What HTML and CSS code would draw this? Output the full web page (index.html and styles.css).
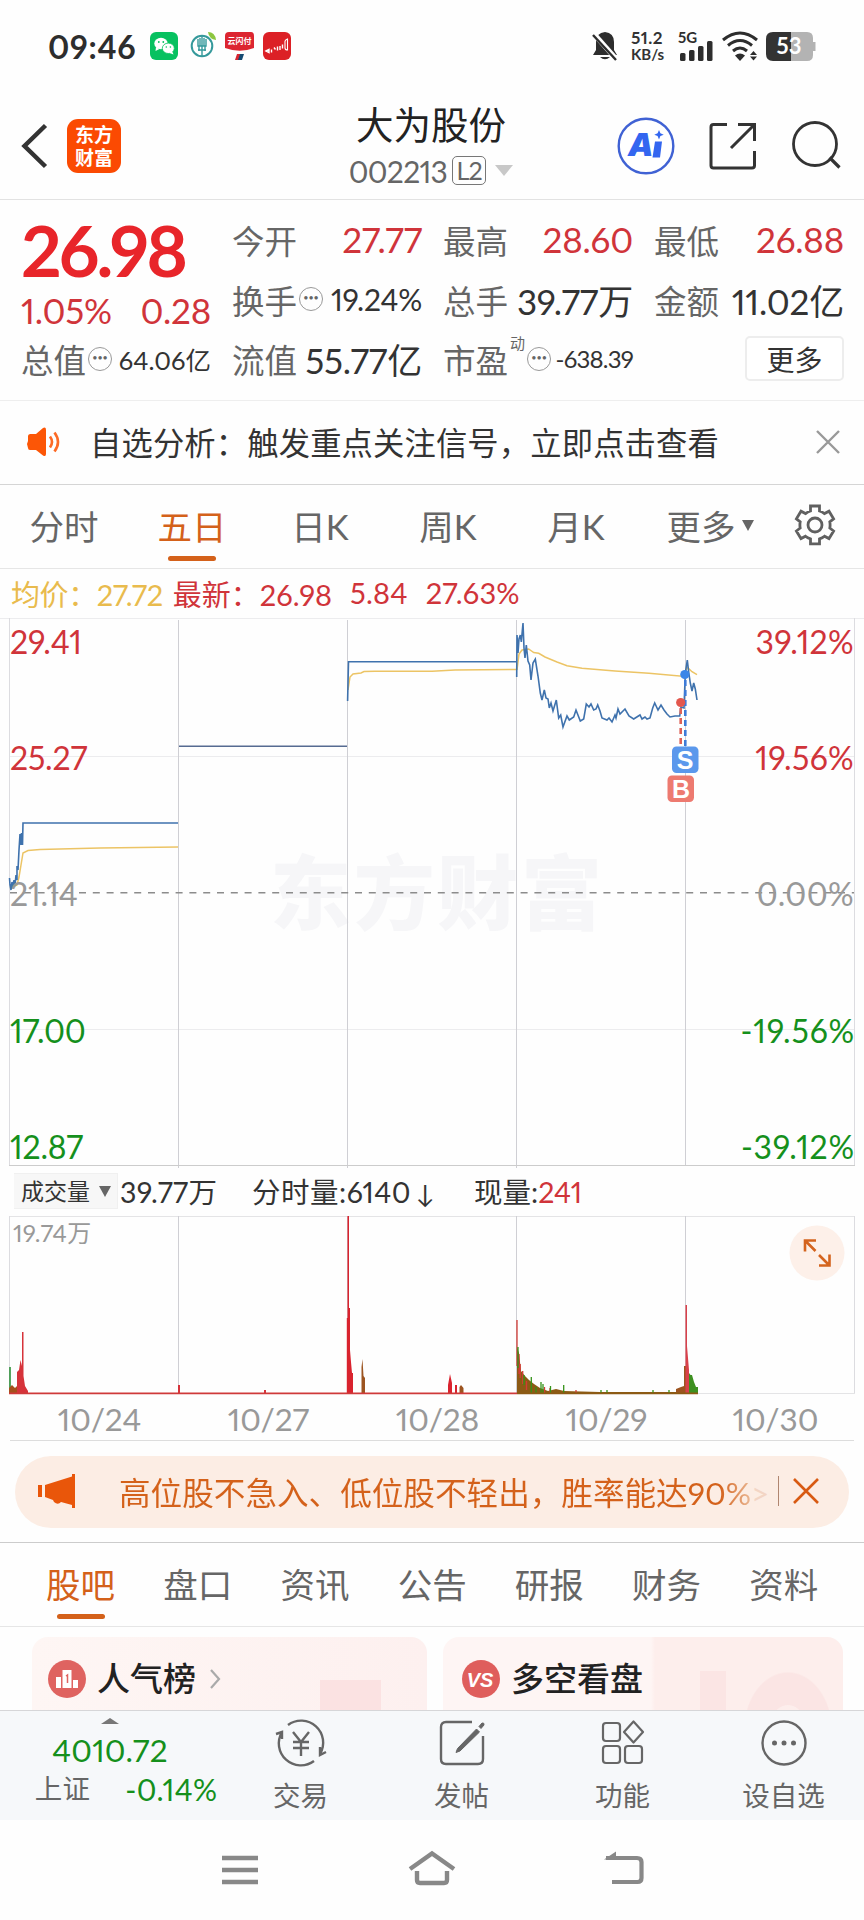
FILE: index.html
```html
<!DOCTYPE html>
<html lang="zh-CN">
<head>
  <meta charset="UTF-8" />
  <meta name="viewport" content="width=device-width, initial-scale=1" />
  <title>大为股份 002213</title>
  <link rel="stylesheet" href="styles.css">
</head>

<body>
  <!-- STATUS BAR -->
  <div class="status">
    <span class="clock">09:46</span>
    <svg class="apps" width="142" height="30" viewBox="0 0 142 30">
      <rect x="0" y="1" width="28" height="28" rx="6" fill="#07c160"/>
      <ellipse cx="11" cy="12.5" rx="6.7" ry="5.8" fill="#fff"/>
      <path d="M6 16l-.5 4 4-2z" fill="#fff"/>
      <ellipse cx="18.3" cy="17.3" rx="6" ry="5.2" fill="#fff" stroke="#07c160" stroke-width=".8"/>
      <path d="M22 20l1.5 3.4-4.5-1.6z" fill="#fff"/>
      <g fill="#07c160"><circle cx="8.8" cy="11" r=".9"/><circle cx="13.3" cy="11" r=".9"/><circle cx="16.3" cy="16" r=".8"/><circle cx="20.4" cy="16" r=".8"/></g>
      <circle cx="52" cy="15" r="10.3" fill="#fff" stroke="#35999b" stroke-width="2"/>
      <path d="M52 5v20M48 8v7h8V8M48 19h8M50 7v8M54 7v8M49 15v5M55 15v5" fill="none" stroke="#35999b" stroke-width="1.4"/>
      <path d="M58 1q7 0 8 8q-7-1-8-8z" fill="#8cc63f"/>
      <path d="M79 1h22q3 0 3 4v12q-14 5.500-29 0V5q0-4 4-4z" fill="#dc2530"/>
      <path d="M87 23h4l-2 6h-4z" fill="#d82531"/><path d="M90 23h4l-2 6h-4z" fill="#154a72"/>
      <text x="89.500" y="13" class="pay">云闪付</text>
      <rect x="113" y="1" width="28" height="28" rx="6" fill="#dc2026"/>
      <path d="M116 20l3-1.500v3zM121.500 18.500v3M124 16.500l1.500 2M127.500 15.500v4M130 15v4M132.500 13.500v4" fill="none" stroke="#fff" stroke-width="1.400"/>
      <path d="M137.500 8q-3 1-2.500 4v5q0 2 2.500 2z" fill="none" stroke="#fff" stroke-width="1.100"/>
    </svg>
    <div class="status-right">
      <svg width="26" height="30" viewBox="0 0 26 30">
        <path d="M13 1q-9 1-9 10v8l-3 5h24l-3-5v-8q0-9-9-10zM8 26h10q-5 4.500-10 0z" fill="#2d2d2d"/>
        <path d="M2 3l23 26" stroke="#fff" stroke-width="5"/>
        <path d="M1 4l23 25" stroke="#2d2d2d" stroke-width="2.400"/>
      </svg>
      <div class="speed"><span class="num">51.2</span><span>KB/s</span></div>
      <svg class="signal" width="36" height="32" viewBox="0 -2 36 32">
        <text x="0" y="11.500" class="net">5G</text>
        <g fill="#2d2d2d"><rect x="2" y="22" width="5.500" height="8" rx="1.500"/><rect x="11" y="19" width="5.500" height="11" rx="1.500"/><rect x="20" y="15" width="5.500" height="15" rx="1.500"/><rect x="29" y="10" width="5.500" height="20" rx="1.500"/></g>
      </svg>
      <svg class="wifi" width="36" height="30" viewBox="0 0 36 30">
        <g fill="none" stroke="#2d2d2d" stroke-width="3"><path d="M1 9q17-14 34 0"/><path d="M6 14.500q12-10 24 0"/><path d="M11 20q7-6 14 0"/></g>
        <path d="M13 24.500q5-4 10 0L18 30z" fill="#2d2d2d"/>
        <path d="M28 24l3.500-4 3.500 4zM28 25.500h7l-3.500 4z" fill="#2d2d2d"/>
      </svg>
      <svg class="battery" width="51" height="30" viewBox="0 0 51 30">
        <path d="M25 1h17q6 0 6 6v4h2.500v9H48v4q0 6-6 6H25z" fill="#b3b3b3"/>
        <path d="M8 1h18v29H8q-7 0-7-7V8q0-7 7-7z" fill="#333"/>
        <text x="24" y="23" class="charge">53</text>
      </svg>
    </div>
  </div>

  <!-- HEADER -->
  <header>
    <svg class="back" width="28" height="46" viewBox="0 0 28 46"><path d="M25.500 2.500L4.500 23l21 20.500" fill="none" stroke="#333" stroke-width="4.500"/></svg>
    <div class="logo">东方<br>财富</div>
    <div class="stock">
      <h1>大为股份</h1>
      <p><span>002213</span><em>L2</em><i class="tri light"></i></p>
    </div>
    <svg class="ai" width="58" height="58" viewBox="0 0 58 58">
      <circle cx="29" cy="29" r="27.300" fill="#fff" stroke="#4062d4" stroke-width="2.400"/>
      <text x="11" y="39" class="ai-text">A</text>
      <path d="M38 24.500h7l-2 16h-7.500z" fill="#3366f0"/>
      <path d="M42 13l1.400 3.300 3.300 1.400-3.300 1.400L42 22.400l-1.400-3.300-3.300-1.400 3.300-1.400z" fill="#3366f0"/>
    </svg>
    <svg class="share" width="48" height="48" viewBox="0 0 48 48">
      <path d="M18 2.500H4.500Q2 2.500 2 5v38.500q0 2.500 2.500 2.500H43q2.500 0 2.500-2.500V29M29 2.500h16.500V19M45 3L22 26" fill="none" stroke="#333" stroke-width="3"/>
    </svg>
    <svg class="search" width="50" height="50" viewBox="0 0 50 50">
      <circle cx="24" cy="23" r="21.500" fill="none" stroke="#333" stroke-width="2.800"/>
      <path d="M38.500 36.500l10 10" stroke="#333" stroke-width="3.200"/>
    </svg>
  </header>

  <!-- QUOTE -->
  <section class="quote">
    <div class="price">
      <strong>26.98</strong>
      <div><span>1.05%</span><span>0.28</span></div>
    </div>
    <div class="cell"><label>今开</label><b class="up">27.77</b></div>
    <div class="cell"><label>最高</label><b class="up">28.60</b></div>
    <div class="cell"><label>最低</label><b class="up">26.88</b></div>
    <div class="cell"><label>换手<i class="more-dot">•••</i></label><b class="mid">19.24%</b></div>
    <div class="cell"><label>总手</label><b>39.77万</b></div>
    <div class="cell"><label>金额</label><b>11.02亿</b></div>
    <div class="cell"><label>总值<i class="more-dot">•••</i></label><b class="small">64.06亿</b></div>
    <div class="cell"><label>流值</label><b>55.77亿</b></div>
    <div class="cell"><label>市盈<sup>动</sup><i class="more-dot">•••</i></label><b class="tiny">-638.39</b></div>
    <div class="cell end"><button>更多</button></div>
  </section>

  <!-- NOTICE -->
  <section class="notice">
    <svg width="36" height="30" viewBox="0 0 36 30">
      <path d="M2 9q0-1.500 2-2h6L17 1q3-1.500 3 2v24q0 3-3 1.500L10 23H4q-2 0-2-2l-1-4 1-3z" fill="#fc5606"/>
      <path d="M24 9.500q4 5.500 0 11M28.500 5.500q7 9.500 0 19" fill="none" stroke="#fc6a25" stroke-width="2.600"/>
    </svg>
    <p>自选分析：触发重点关注信号，立即点击查看</p>
    <svg class="close" width="24" height="24" viewBox="0 0 24 24"><path d="M1 1l22 22M23 1L1 23" stroke="#999" stroke-width="2.400"/></svg>
  </section>

  <!-- PERIOD TABS -->
  <nav class="period">
    <a>分时</a>
    <a class="active">五日</a>
    <a>日K</a>
    <a>周K</a>
    <a>月K</a>
    <a class="drop">更多<i class="tri"></i></a>
    <a><svg width="42" height="42" viewBox="0 0 42 42">
      <path d="M16.500 2h9v5q3 1 5 2.600l4.500-2.400 4.600 7.600-3.800 3q.6 3.200 0 6.200l3.800 3-4.600 7.600-4.500-2.400q-2 1.700-5 2.700v5h-9v-5q-3-1-5-2.700L7 34.600 2.400 27l3.800-3q-.6-3 0-6.200l-3.800-3L7 7.200l4.500 2.400q2-1.600 5-2.600z" fill="none" stroke="#606060" stroke-width="2.800"/>
      <circle cx="21" cy="21" r="7" fill="none" stroke="#606060" stroke-width="2.800"/>
    </svg></a>
  </nav>

  <!-- PRICE CHART -->
  <div class="legend">
    <span class="avg">均价：27.72</span>
    <span class="last">最新：26.98</span>
    <span>5.84</span>
    <span>27.63%</span>
  </div>
  <svg class="chart" width="864" height="551" viewBox="0 0 864 551">
    <text x="436" y="305" class="watermark" textLength="332">东方财富</text>
    <path d="M0 .5H864M9 138.500H854M9 411.500H854" stroke="#ececee"/>
    <path d="M9.500 0V547M854.500 0V547" stroke="#dcdce0"/>
    <path d="M178.500 2V550M347.500 2V550M516.500 2V550M685.500 2V547" stroke="#cfcfd4"/>
    <path d="M9 547.500H855" stroke="#ccc"/>
    <path d="M10 274.700H854" stroke="#8c8c8c" stroke-width="1.500" stroke-dasharray="7 6.800"/>
    <!-- average -->
    <g fill="none" stroke="#ecc465" stroke-width="1.500">
      <path d="M10 270L17 267L19 259L21 247L23 235L28 232.500L40 231.500L100 230L178 229"/>
      <path d="M348 72L350 59L353 56L361 55L364 53.500L375 53.300L432 53.300L455 52L516 51.500"/>
      <path d="M517 52L519 36L522 32L528.700 31L533.700 34.500L538.700 35.300L545 39L557 44L567 47.700L582 50.300L615 53L649 55.300L685 58.500L687 49L692 53.700L697 56.700"/>
    </g>
    <!-- price -->
    <g fill="none" stroke="#3f72ad" stroke-width="1.600">
      <path d="M9.500 260L10 267L11 272L12 264L13 270L14 262L15 267L16 257L17 262L17 248L18 252L19 232L20 216L21 227L21.500 215L22.500 227L23 205H178"/>
      <path d="M179 128.300H347" stroke="#566b91"/>
      <path d="M347.600 83L348.500 43.700H516.500"/>
      <path d="M516.700 59L517 17L518 35L519 21L520.300 17L521.300 24L523 5L524 30L525 40L526.300 27L528 43L529.700 47L531 62L533 45L535.300 41L538 58L540.300 75L542 82L544.300 72L546 80L548 81L549.300 90L551 85L553 93L556.300 82L558.700 100L560.700 97L563 109L567 98L569.300 102L573.700 99L576 92L580.300 103L583.700 101L586.300 86L589 89L591 86L593.700 92L596 91L597.700 87L600 93L602 100L607 102L609 100L612 104L615 97L616 100L618 91L620 96L625 91L629 98L633.700 101L640 97L642 101L645 99L647 101L650 100L652.700 90L654.700 85L658 92L661 87L664 92L667 96L670 99L675 98L679.700 98L681 89L684 90L685.300 55L687.300 42L688.700 54L690.300 65L692 73L693.700 65L695.300 71L697 82"/>
    </g>
    <path d="M680.700 90V130" stroke="#dd6258" stroke-width="2.600" stroke-dasharray="6 4"/>
    <path d="M685.300 62V130" stroke="#3d7bd8" stroke-width="2.600" stroke-dasharray="6 4"/>
    <circle cx="680.700" cy="84.500" r="4.600" fill="#e3574d"/>
    <circle cx="684.800" cy="56.500" r="4.600" fill="#3b86e8"/>
    <rect x="672" y="128.500" width="26.500" height="26.500" rx="4.500" fill="#5b98ec"/>
    <text x="685.200" y="151" class="flag">S</text>
    <rect x="667.500" y="157.500" width="26.500" height="26.500" rx="4.500" fill="#ed7a70"/>
    <text x="681" y="180" class="flag">B</text>
    <g class="axis">
      <text x="10" y="35.500" class="up">29.41</text>
      <text x="10" y="151.500" class="up">25.27</text>
      <text x="10" y="288" class="flat">21.14</text>
      <text x="10" y="424.500" class="down">17.00</text>
      <text x="10" y="540.500" class="down">12.87</text>
    </g>
    <g class="axis right">
      <text x="854" y="35.500" class="up">39.12%</text>
      <text x="854" y="151.500" class="up">19.56%</text>
      <text x="854" y="288" class="flat">0.00%</text>
      <text x="855" y="424.500" class="down">-19.56%</text>
      <text x="855" y="540.500" class="down">-39.12%</text>
    </g>
  </svg>

  <!-- VOLUME -->
  <div class="vol-head">
    <span class="select">成交量<i class="tri"></i></span>
    <span class="total">39.77万</span>
    <span class="minute">分时量:6140<i>↓</i></span>
    <span>现量:<b>241</b></span>
  </div>
  <svg class="chart" width="864" height="180" viewBox="0 0 864 180">
    <path d="M9 .5H854M9 177.500H855" stroke="#e4e4e6"/>
    <path d="M9.500 0V177M854.500 0V177" stroke="#dcdce0"/>
    <path d="M178.500 0V177M347.500 0V177M516.500 0V177M685.500 0V177" stroke="#cfcfd4"/>
    <path d="M10 178V151" stroke="#1f8a2c" stroke-width="1.500"/>
    <path d="M9 178V172L12 169L15 172L17 170V178z" fill="#a5501c"/>
    <path d="M17 178V156L19 154L20.500 144L22 150V116H23.500V160L25 170L28 175V178zM178 178V169H180V178zM264 178V174H266V178z" fill="#d6333a"/>
    <path d="M346.800 178V102H347.500V0H349V92H350V134L351 146L352 157H353V178zM448 178V169L450 158L452 167V178zM455 178V169H457V178z" fill="#d9232e"/>
    <path d="M361.500 178V151L362.500 143L363.500 160L365 162V178zM459.500 178V171L461 169L463.500 172V178z" fill="#9c5420"/>
    <path d="M9 177.400H517" stroke="#cf3a3a" stroke-width="1.800"/>
    <path d="M517 178V131L519 137L521 155L525 160L529 164L534 168L540 172L548 175L556 173L564 175L600 176L680 176V178z" fill="#8c5a14"/>
    <path d="M517 104V150M519 138V158M520.200 148V162M522.700 155V168M526.500 165V174M544.500 171V178M550 172V178M576 174V177" stroke="#d23c36" stroke-width="1.300"/>
    <path d="M518 131V152M524 159V169M531.300 161V178M536 171V178M541 166V178M543 168V178M550.500 170V178M563.700 169V178M601 174V178M607 174V178M653 174V178M669 174V178" stroke="#359219" stroke-width="1.300"/>
    <path d="M676 178V173L681 171L684 170V150H686V178z" fill="#9c5420"/>
    <path d="M685.500 178V89H687V130L688 142L689 154V178z" fill="#d9404a"/>
    <path d="M689 178V157L690.500 159L692 159L694 166L696 171H698V178z" fill="#3d9020"/>
    <path d="M517 177.400H698" stroke="#8c5a14" stroke-width="1.800"/>
    <text x="13" y="26" class="peak">19.74万</text>
    <circle cx="817" cy="37" r="27.500" fill="#fdf0e9"/>
    <path d="M816 24.500H805V35.500M805.500 25L815.500 35M819 49.500H829.500V38.500M829 49L819 39" fill="none" stroke="#d4641e" stroke-width="2.600"/>
  </svg>
  <div class="dates"><span>10/24</span><span>10/27</span><span>10/28</span><span>10/29</span><span>10/30</span></div>

  <!-- PROMO -->
  <div class="promo">
    <svg width="38" height="34" viewBox="0 0 38 34">
      <path d="M0 11h4v12H0zM7 11L34 2.500V0h3v34h-3v-3l-11-3q-3 3.500-7 0l-1-2-8-3z" fill="#e9560a"/>
    </svg>
    <p><span>高位股不急入、低位股不轻出，胜率能达90%</span><i>&gt;</i></p>
    <hr>
    <svg class="close" width="26" height="26" viewBox="0 0 26 26"><path d="M1 1l24 24M25 1L1 25" stroke="#d85a12" stroke-width="2.600"/></svg>
  </div>

  <!-- INFO TABS -->
  <nav class="info">
    <a class="active">股吧</a>
    <a>盘口</a>
    <a>资讯</a>
    <a>公告</a>
    <a>研报</a>
    <a>财务</a>
    <a>资料</a>
  </nav>

  <section class="cards">
    <div class="card">
      <svg width="38" height="38" viewBox="0 0 38 38">
        <circle cx="19" cy="19" r="19" fill="#df6360"/>
        <path d="M8 17h5v11H8zM14.500 10h9v18h-9zM25 20h5v8h-5z" fill="#fff"/>
        <path d="M18 16l1.500-1v8" fill="none" stroke="#df6360" stroke-width="1.500"/>
      </svg>
      <h3>人气榜</h3>
      <svg class="more" width="12" height="20" viewBox="0 0 12 20"><path d="M2 1l8 9-8 9" fill="none" stroke="#aaa" stroke-width="2.200"/></svg>
    </div>
    <div class="card versus">
      <svg width="38" height="38" viewBox="0 0 38 38">
        <circle cx="19" cy="19" r="19" fill="#df5e5c"/>
        <text x="18" y="27" class="vs">VS</text>
      </svg>
      <h3>多空看盘</h3>
    </div>
  </section>

  <!-- BOTTOM BAR -->
  <footer>
    <div class="index">
      <i class="tri up-tri"></i>
      <b>4010.72</b>
      <p><span>上证</span><em>-0.14%</em></p>
    </div>
    <a>
      <svg width="54" height="48" viewBox="0 0 54 48">
        <g fill="none" stroke="#666" stroke-width="2.400">
          <path d="M14 6A22 22 0 0 1 46 35M40 42A22 22 0 0 1 8 13M2 15l6-2v7M46 28v8l6-3"/>
          <path d="M19 13l8 10 8-10M27 23v14M19 23h16M19 29h16"/>
        </g>
      </svg>
      <span>交易</span>
    </a>
    <a>
      <svg width="48" height="48" viewBox="0 0 48 48">
        <path d="M34 3H8Q3 3 3 8v32q0 5 5 5h32q5 0 5-5V17" fill="none" stroke="#666" stroke-width="2.400"/>
        <path d="M38.500 10l3 3L22 32l-4 1.500 1.500-4zM41 7.500l3-3.500q2.500-.5 2 2l-3 3.500z" fill="#666" stroke="#666"/>
      </svg>
      <span>发帖</span>
    </a>
    <a>
      <svg width="44" height="48" viewBox="0 0 44 48">
        <g fill="none" stroke="#666" stroke-width="2.200"><rect x="2" y="4" width="17" height="18" rx="3"/><rect x="2" y="27" width="17" height="17" rx="3"/><rect x="24" y="27" width="17" height="17" rx="3"/><path d="M32.500 2.500L42 13l-9.500 10.500L23 13z" stroke-linejoin="round"/></g>
      </svg>
      <span>功能</span>
    </a>
    <a>
      <svg width="48" height="48" viewBox="0 0 48 48">
        <circle cx="24" cy="24" r="21.500" fill="none" stroke="#666" stroke-width="2.400"/>
        <g fill="#666"><circle cx="14.500" cy="24" r="2.500"/><circle cx="24" cy="24" r="2.500"/><circle cx="33.500" cy="24" r="2.500"/></g>
      </svg>
      <span>设自选</span>
    </a>
  </footer>

  <!-- SYSTEM NAV -->
  <div class="system">
    <svg width="48" height="40" viewBox="0 0 48 40"><path d="M6 8h36M6 20h36M6 32h36" stroke="#888" stroke-width="4.500"/></svg>
    <svg width="48" height="40" viewBox="0 0 48 40"><path d="M2 19L24 3.500 46 19M9 21v9q0 3 3 3h24q3 0 3-3v-9" fill="none" stroke="#888" stroke-width="4.400"/></svg>
    <svg width="48" height="40" viewBox="0 0 48 40"><path d="M6 8H37q4.500 0 4.500 4V28q0 4-4 4H12" fill="none" stroke="#888" stroke-width="4.200"/><path d="M16 1.500v8H4z" fill="#888"/></svg>
  </div>
</body>
</html>
```
FILE: styles.css
```css
/* BASE */
* { box-sizing: border-box; }
body {
  margin: 0;
  width: 864px;
  height: 1920px;
  overflow: hidden;
  background: #fefefe;
  color: #333;
  font-family: Lato, "Noto Sans CJK SC", sans-serif;
  font-variant-numeric: proportional-nums;
  display: flex;
  flex-direction: column;
}
body > * { flex-shrink: 0; }
h1, h3, p { margin: 0; font-weight: 400; }
b, i, em { font-weight: 400; font-style: normal; }
svg { display: block; }
a { white-space: nowrap; }
.up { color: #d0343a; fill: #d0343a; }
.down { color: #15901c; fill: #15901c; }
.flat { fill: #999; }

/* small dropdown arrow */
.tri {
  display: inline-block;
  border: 6px solid transparent;
  border-top: 11px solid #666;
  border-bottom: 0;
}
.tri.light { border-width: 11px 9px 0; border-top-color: #c8c8c8; }

/* STATUS BAR */
.status { height: 92px; padding-left: 48px; display: flex; align-items: center; }
.clock { width: 102px; font-size: 32px; font-weight: 700; letter-spacing: .7px; color: #2d2d2d; }
.pay { font-size: 8px; font-weight: 700; fill: #fff; text-anchor: middle; }
.status-right { display: flex; align-items: center; margin-left: 300px; }
.speed {
  width: 35px;
  margin: 0 12px 0 13px;
  font-size: 15px;
  line-height: 16px;
  font-weight: 700;
  display: flex;
  flex-direction: column;
}
.speed .num { font-size: 17px; letter-spacing: .5px; }
.net { font-size: 15px; font-weight: 700; fill: #2d2d2d; }
.signal { margin: -2px 8px 0 0; }
.wifi { margin-right: 7px; }
.charge { font-size: 22px; font-weight: 700; fill: #fff; text-anchor: middle; }

/* HEADER */
header {
  height: 108px;
  border-bottom: 1px solid #e2e2e2;
  padding-left: 20px;
  display: flex;
  align-items: center;
}
.logo {
  width: 54px;
  height: 54px;
  margin-left: 19px;
  padding-top: 4px;
  border-radius: 11px;
  background: #fb4a02;
  color: #fff;
  font-size: 19px;
  line-height: 23px;
  font-weight: 700;
  text-align: center;
}
.stock { width: 220px; margin-left: 200px; text-align: center; }
h1 { font-size: 37.5px; line-height: 50px; color: #222; }
.stock p {
  display: flex;
  align-items: center;
  justify-content: center;
  height: 42px;
  font-size: 30px;
  color: #666;
  letter-spacing: -.7px;
}
.stock em {
  width: 34px;
  height: 29px;
  margin: 0 9px 0 5px;
  border: 1px solid #777;
  border-radius: 5px;
  font-size: 25px;
  line-height: 27px;
}
.ai { margin-left: 76px; }
.share { margin-left: 34px; }
.search { margin-left: 34px; }
.ai-text { font-family: Inter, sans-serif; font-size: 32px; font-weight: 900; font-style: italic; fill: #3366f0; }

/* QUOTE */
.quote {
  height: 201px;
  padding: 9px 20px 13px 21px;
  border-bottom: 1px solid #eee;
  display: grid;
  grid-template-columns: 190px 190px 190px 190px;
  grid-template-rows: 60px 60px 59px;
  column-gap: 21px;
}
.price { grid-row: span 2; color: #e8252a; }
.price strong { display: block; height: 82px; font-size: 71px; line-height: 82px; letter-spacing: -3px; }
.price div { display: flex; justify-content: space-between; color: #d0343a; font-size: 35px; line-height: 38px; letter-spacing: -.2px; }
.cell { display: flex; align-items: center; justify-content: space-between; white-space: nowrap; }
.cell label { display: flex; align-items: center; font-size: 32.5px; color: #666; }
.cell b { font-size: 35px; letter-spacing: -.2px; }
.cell .mid { font-size: 30px; }
.cell .small { font-size: 25.5px; letter-spacing: 0; }
.cell .tiny { font-size: 24px; letter-spacing: -.8px; }
.cell.end { justify-content: flex-end; }
.more-dot {
  width: 24px;
  height: 24px;
  margin-left: 2px;
  border: 1.8px solid #999;
  border-radius: 50%;
  font-size: 9px;
  line-height: 20px;
  text-align: center;
}
sup { font-size: 15px; align-self: flex-start; line-height: 15px; margin: 1px 0 0 2px; }
.quote button {
  width: 99px;
  height: 45px;
  padding: 0;
  border: 2px solid #ededed;
  border-radius: 5px;
  background: #fff;
  color: #333;
  font: 28px "Noto Sans CJK SC", sans-serif;
  line-height: 38px;
}

/* NOTICE */
.notice { height: 84px; padding: 0 24px 2px 26px; border-bottom: 1px solid #d5d5d5; display: flex; align-items: center; }
.notice p { margin-left: 28px; font-size: 31.3px; letter-spacing: .15px; white-space: nowrap; }
.notice .close { margin-left: auto; }

/* TABS */
nav { height: 84px; border-bottom: 1px solid #e6e6e6; display: grid; font-size: 34.5px; color: #666; }
.period { grid-template-columns: repeat(6, 128px) 94px; }
.info { grid-template-columns: repeat(7, 117.2px); padding-left: 22px; }
nav a { position: relative; display: flex; align-items: center; justify-content: center; padding-bottom: 3px; }
nav .tri { margin-left: 6px; }
nav .drop { padding-left: 12px; }
nav .active { color: #d4611a; }
nav .active::after {
  content: "";
  position: absolute;
  bottom: 7px;
  left: calc(50% - 24px);
  width: 48px;
  height: 5px;
  border-radius: 3px;
  background: #d4611a;
}

/* CHARTS */
.legend { height: 49px; padding: 0 0 2px 11px; display: flex; align-items: center; font-size: 29px; color: #d0343a; white-space: nowrap; letter-spacing: .2px; }
.legend span { margin-right: 18px; }
.legend .avg { margin-right: 10px; color: #e9bb4d; letter-spacing: -.4px; }
.legend .last { letter-spacing: 0; }
.axis { font-size: 32px; letter-spacing: -.2px; }
.axis.right { text-anchor: end; letter-spacing: .3px; }
.axis.right .down { letter-spacing: .8px; }
.watermark { font-size: 81px; font-weight: 900; fill: #f6f6f8; text-anchor: middle; }
.flag { font: 700 25px "Liberation Sans", sans-serif; fill: #fff; text-anchor: middle; }
.peak { font-size: 24px; letter-spacing: .3px; fill: #999; }
.vol-head { height: 47px; padding: 0 0 4px 14px; display: flex; align-items: center; font-size: 28.500px; white-space: nowrap; }
.select { width: 104px; height: 36px; padding-left: 7px; background: #f7f7f7; font-size: 23px; line-height: 35px; border: 1px solid #f0f0f0; border-left: 0; }
.select .tri { margin-left: 9px; vertical-align: 3px; }
.total { width: 132px; margin-left: 2px; letter-spacing: .3px; }
.minute { width: 222px; letter-spacing: .5px; }
.minute i { margin-left: 5px; font-size: 25px; }
.vol-head b { color: #d0343a; }
.dates {
  height: 45px;
  margin: 0 10px;
  padding-left: 5px;
  border-bottom: 1px solid #ddd;
  display: grid;
  grid-template-columns: repeat(5, 169px);
  text-align: center;
  font-size: 31.500px;
  line-height: 46px;
  color: #999;
}

/* PROMO */
.promo {
  height: 72px;
  margin: 15px 15px 14px;
  padding: 0 0 2px 23px;
  border-radius: 36px;
  background: #fcede4;
  display: flex;
  align-items: center;
}
.promo p { width: 659px; margin-left: 43px; padding-bottom: 1px; font-size: 31.6px; color: #d4611a; white-space: nowrap; }
.promo span {
  background: linear-gradient(90deg, #d4611a 95%, #eab894);
  -webkit-background-clip: text;
  -webkit-text-fill-color: transparent;
}
.promo i { color: #f3d5c4; }
.promo hr { width: 1px; height: 30px; margin: 0 14px 0 0; border: 0; background: #b08670; }

/* CARDS */
.info { height: 85px; border-top: 1px solid #ccc; }
.cards { height: 83px; padding: 10px 21px 0 32px; display: grid; grid-template-columns: 395px 400px; column-gap: 16px; overflow: hidden; }
.card {
  height: 110px;
  padding: 23px 0 0 16px;
  border-radius: 16px;
  display: flex;
  align-items: flex-start;
  background:
    linear-gradient(#fbe2e2, #fbe2e2) 288px 43px / 61px 80px no-repeat,
    linear-gradient(90deg, #fef6f4, #fdf0ef);
}
.card h3 { margin: 0 13px 0 11px; font-size: 33px; line-height: 37px; font-weight: 500; color: #222; }
.card .more { margin-top: 9px; }
.versus {
  padding-left: 19px;
  background:
    linear-gradient(#fbe5e4, #fbe5e4) 257px 34px / 26px 80px no-repeat,
    radial-gradient(ellipse at 50% 100%, transparent 30%, #fbe5e4 31% 68%, transparent 70%) 300px 34px / 90px 60px no-repeat,
    linear-gradient(90deg, #fef5f4 52%, #fdeeec 53%);
}
.vs { font: italic 700 20px "Liberation Sans", sans-serif; fill: #fff; text-anchor: middle; }

/* BOTTOM BAR */
footer { height: 110px; border-top: 1px solid #d6d6d8; background: #f6f8fa; display: grid; grid-template-columns: 220px repeat(4, 161px); }
footer a { display: flex; flex-direction: column; align-items: center; padding-top: 8px; }
footer a span { margin-top: 11px; font-size: 27.500px; line-height: 36px; color: #666; }
.index { display: flex; flex-direction: column; align-items: center; color: #15901c; font-size: 31.500px; }
.up-tri { margin-top: 7px; border-width: 0 9px 6px; border-bottom: 6px solid #777; }
.index b { margin-top: 7px; line-height: 38px; letter-spacing: .2px; }
.index p { display: flex; gap: 35px; margin-left: 32px; line-height: 40px; font-size: 30px; letter-spacing: .3px; }
.index p span { font-size: 27.500px; color: #666; }

.system { height: 101px; padding-top: 30px; display: flex; justify-content: center; gap: 144px; }
```
